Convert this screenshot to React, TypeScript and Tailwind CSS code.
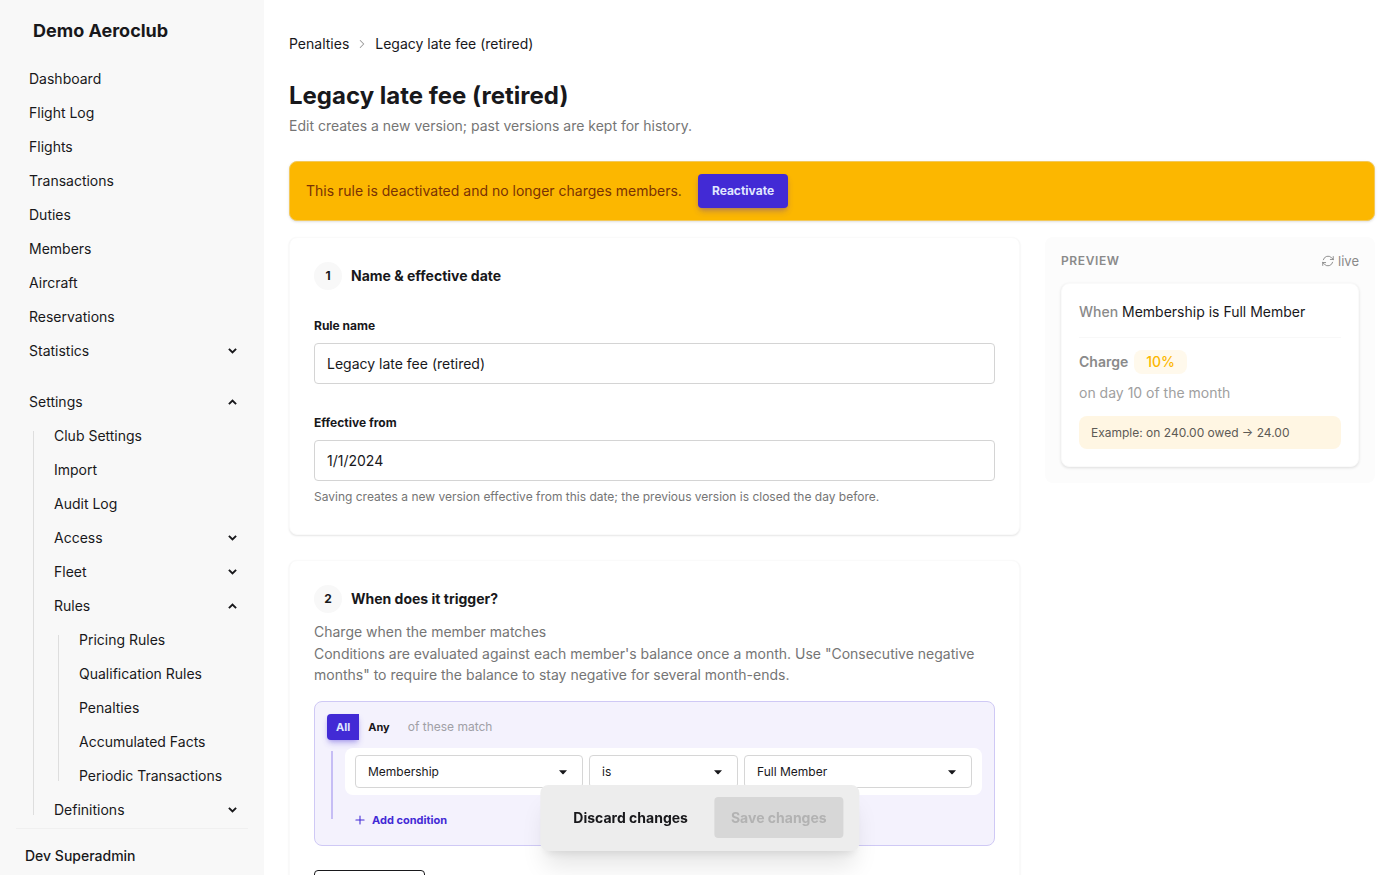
import { useState } from 'react';
import type { ReactNode } from 'react';
import { ChevronRight, Plus } from 'lucide-react';

type NavItem = {
  label: string;
  open?: boolean;
  group?: boolean;
  children?: NavItem[];
};

const mainItems: NavItem[] = [
  { label: 'Dashboard' },
  { label: 'Flight Log' },
  { label: 'Flights' },
  { label: 'Transactions' },
  { label: 'Duties' },
  { label: 'Members' },
  { label: 'Aircraft' },
  { label: 'Reservations' },
  { label: 'Statistics', group: true },
];

const settingsItems: NavItem[] = [
  {
    label: 'Settings',
    group: true,
    open: true,
    children: [
      { label: 'Club Settings' },
      { label: 'Import' },
      { label: 'Audit Log' },
      { label: 'Access', group: true },
      { label: 'Fleet', group: true },
      {
        label: 'Rules',
        group: true,
        open: true,
        children: [
          { label: 'Pricing Rules' },
          { label: 'Qualification Rules' },
          { label: 'Penalties' },
          { label: 'Accumulated Facts' },
          { label: 'Periodic Transactions' },
        ],
      },
      { label: 'Definitions', group: true },
    ],
  },
];

const Caret = ({ up = false }: { up?: boolean }) => (
  <svg width="9" height="6" viewBox="0 0 9 6" fill="none" stroke="currentColor" strokeWidth="1.9">
    <path d={up ? 'M0.9 5.1L4.5 1.5L8.1 5.1' : 'M0.9 0.9L4.5 4.5L8.1 0.9'} />
  </svg>
);

const RefreshIcon = () => (
  <svg
    className="size-[14px]"
    viewBox="0 0 24 24"
    fill="none"
    stroke="currentColor"
    strokeWidth="1.6"
    strokeLinecap="round"
    strokeLinejoin="round"
  >
    <path d="M16.023 9.348h4.992v-.001M2.985 19.644v-4.992m0 0h4.992m-4.993 0 3.181 3.183a8.25 8.25 0 0 0 13.803-3.7M4.031 9.865a8.25 8.25 0 0 1 13.803-3.7l3.181 3.182m0-4.991v4.99" />
  </svg>
);

const NavList = ({ items }: { items: NavItem[] }) => (
  <ul className="min-w-0 flex-1">
    {items.map((item) => (
      <NavEntry key={item.label} item={item} />
    ))}
  </ul>
);

const NavEntry = ({ item }: { item: NavItem }) => {
  const [open, setOpen] = useState(!!item.open);

  if (!item.group) {
    return (
      <li>
        <a href="#" className="flex h-[34px] items-center rounded px-3 hover:bg-black/5">
          {item.label}
        </a>
      </li>
    );
  }

  return (
    <li>
      <button
        type="button"
        aria-expanded={open}
        onClick={() => setOpen(!open)}
        className="flex h-[34px] w-full items-center justify-between rounded pl-3 pr-[10px] hover:bg-black/5"
      >
        {item.label}
        <Caret up={open} />
      </button>
      {open && item.children && (
        <div className="flex">
          <div className="my-3 ml-4 mr-2 w-px bg-[#dedede]" />
          <NavList items={item.children} />
        </div>
      )}
    </li>
  );
};

const Sidebar = () => (
  <aside className="sticky top-0 flex h-screen w-66 shrink-0 flex-col bg-[#f8f8f8] px-4">
    <div className="px-[17px] pt-[17px] text-lg font-bold leading-7">Demo Aeroclub</div>
    <nav className="mt-[17px] min-h-0 flex-1 space-y-[17px] overflow-hidden px-px text-sm">
      <NavList items={mainItems} />
      <NavList items={settingsItems} />
    </nav>
    <div className="border-t border-[#f0f0f0] px-[9px] pb-2 pt-4 text-sm font-medium leading-[22px]">
      Dev Superadmin
    </div>
  </aside>
);

const Step = ({ n, title }: { n: number; title: string }) => (
  <div className="flex items-center gap-[9px]">
    <span className="flex size-7 items-center justify-center rounded-full bg-[#f8f8f8] text-xs font-bold">
      {n}
    </span>
    <h2 className="text-sm font-bold">{title}</h2>
  </div>
);

const Card = ({ children }: { children: ReactNode }) => (
  <section className="rounded-lg border border-[#fafafa] bg-white p-6 shadow-[0_1px_2px_rgba(0,0,0,0.1)]">
    {children}
  </section>
);

const SelectBox = ({ label, options }: { label: string; options: string[] }) => (
  <div className="relative">
    <select
      aria-label={label}
      className="h-[33px] w-full appearance-none rounded border border-[#d6d6d6] bg-white pl-3 pr-8 text-xs"
    >
      {options.map((o) => (
        <option key={o}>{o}</option>
      ))}
    </select>
    <svg
      className="pointer-events-none absolute right-4 top-[15px]"
      width="8"
      height="5"
      viewBox="0 0 8 5"
      fill="currentColor"
    >
      <path d="M0 0.3h8L4.6 3.9a0.9 0.9 0 0 1-1.2 0z" />
    </svg>
  </div>
);

const Preview = () => (
  <aside className="self-start rounded-lg bg-[#fcfcfc] p-4">
    <div className="mb-[14px] flex items-center justify-between leading-4 text-[#8a8a8a]">
      <h2 className="text-xs font-semibold tracking-wider">PREVIEW</h2>
      <span className="flex items-center gap-[3px] text-[13px]">
        <RefreshIcon />
        live
      </span>
    </div>
    <div className="rounded-lg border border-[#fafafa] bg-white p-[17px] text-sm shadow-[0_1px_3px_rgba(0,0,0,0.12)]">
      <p className="border-b border-[#f8f8f8] pb-[15px] pt-px">
        <span className="font-medium text-[#8a8a8a]">When</span> Membership is Full Member
      </p>
      <p className="flex items-center gap-[6px] pt-3">
        <span className="font-semibold text-[#8a8a8a]">Charge</span>
        <span className="rounded-lg bg-[#fff9ec] px-3 font-medium leading-6 text-[#fcb700]">10%</span>
      </p>
      <p className="mt-[9px] text-[#a0a0a0]">on day 10 of the month</p>
      <p className="mt-[13px] rounded-lg bg-[#fff6e3] px-3 text-xs leading-[33px] text-[#5d5a55]">
        Example: on 240.00 owed → 24.00
      </p>
    </div>
  </aside>
);

const RuleForm = () => {
  const [name, setName] = useState('Legacy late fee (retired)');
  const [date, setDate] = useState('1/1/2024');
  const input = 'h-[41px] w-full rounded border border-[#d4d4d4] bg-white px-3 text-sm';

  return (
    <div className="min-w-0 space-y-[25px]">
      <Card>
        <Step n={1} title="Name & effective date" />
        <div className="mt-[26px]">
          <label htmlFor="rule-name" className="mb-[7px] block text-xs font-bold leading-5">
            Rule name
          </label>
          <input id="rule-name" className={input} value={name} onChange={(e) => setName(e.target.value)} />
        </div>
        <div className="mt-[29px]">
          <label htmlFor="effective-from" className="mb-[7px] block text-xs font-bold leading-5">
            Effective from
          </label>
          <input id="effective-from" className={input} value={date} onChange={(e) => setDate(e.target.value)} />
          <p className="mt-[5px] pb-[3px] text-xs leading-[21px] text-[#757575]">
            Saving creates a new version effective from this date; the previous version is closed the day before.
          </p>
        </div>
      </Card>

      <Card>
        <Step n={2} title="When does it trigger?" />
        <div className="mt-2 text-sm text-[#757575]">
          <p className="leading-[22px]">Charge when the member matches</p>
          <p className="leading-[21px]">
            Conditions are evaluated against each member's balance once a month. Use "Consecutive negative months"
            to require the balance to stay negative for several month-ends.
          </p>
        </div>

        {/* Condition group */}
        <div className="mt-4 rounded-lg border border-[#cfc9f5] bg-[#f4f2fd] p-3">
          <div className="flex items-center">
            <button
              type="button"
              className="h-[26px] rounded-l bg-[#422ad5] px-[9px] text-[11px] font-bold text-[#e0e7ff] shadow-md shadow-[#422ad5]/30"
            >
              All
            </button>
            <button type="button" className="h-[26px] rounded-r px-[9px] text-[11px] font-bold">
              Any
            </button>
            <span className="ml-[9px] text-xs text-[#a0a0a6]">of these match</span>
          </div>
          <div className="mt-2 flex">
            <div className="mb-[14px] ml-1 mr-3 mt-[3px] w-0.5 bg-[#c6bdf5]" />
            <div className="min-w-0 flex-1">
              <div className="grid grid-cols-[1fr_149px_1fr] gap-[6px] rounded-lg bg-white px-[10px] py-[7px]">
                <SelectBox label="Fact" options={['Membership', 'Balance', 'Consecutive negative months']} />
                <SelectBox label="Operator" options={['is', 'is not']} />
                <SelectBox label="Value" options={['Full Member', 'Student']} />
              </div>
              <button
                type="button"
                className="mt-3 flex h-[26px] items-center gap-[5px] px-2 text-[11px] font-bold text-[#422ad5]"
              >
                <Plus size={14} strokeWidth={1.8} />
                Add condition
              </button>
            </div>
          </div>
        </div>

        <button type="button" className="mt-6 h-[41px] rounded border border-[#18181b] px-3 text-xs font-bold">
          Add exception
        </button>
      </Card>
    </div>
  );
};

const App = () => (
  <div className="flex min-h-screen bg-white font-[Inter,'Liberation_Sans',sans-serif] text-[#18181b]">
    <Sidebar />
    <main className="min-w-0 flex-1 px-[25px] pb-24 pt-[34px]">
      <nav aria-label="Breadcrumb" className="flex items-center text-sm">
        <a href="#" className="hover:underline">
          Penalties
        </a>
        <ChevronRight size={14} strokeWidth={1.8} className="mx-[6px] text-[#9a9a9a]" />
        <span>Legacy late fee (retired)</span>
      </nav>

      <h1 className="mt-[26px] text-2xl font-bold leading-8">Legacy late fee (retired)</h1>
      <p className="mt-1 text-sm text-[#757575]">
        Edit creates a new version; past versions are kept for history.
      </p>

      {/* Deactivated notice */}
      <div
        role="alert"
        className="mt-[25px] flex items-center gap-4 rounded-lg border border-[#f3c95a] bg-[#fcb700] px-4 py-3 text-sm text-[#793205] shadow-sm"
      >
        <span>This rule is deactivated and no longer charges members.</span>
        <button
          type="button"
          className="h-[34px] rounded bg-[#422ad5] px-[14px] text-xs font-bold text-[#e0e7ff] shadow-md shadow-[#422ad5]/30"
        >
          Reactivate
        </button>
      </div>

      <div className="mt-4 grid grid-cols-[minmax(0,1fr)_330px] gap-[25px]">
        <RuleForm />
        <Preview />
      </div>
    </main>

    {/* Save bar */}
    <div className="fixed bottom-6 left-1/2 flex -translate-x-1/2 items-center gap-[9px] rounded-lg bg-[#ededed] px-4 pb-[13px] pt-3 text-sm font-bold shadow-xl">
      <button type="button" className="h-[41px] px-[17px]">
        Discard changes
      </button>
      <button type="button" disabled className="h-[41px] rounded bg-[#d7d7d7] px-[17px] text-[#b2b2b2]">
        Save changes
      </button>
    </div>
  </div>
);

export default App;
